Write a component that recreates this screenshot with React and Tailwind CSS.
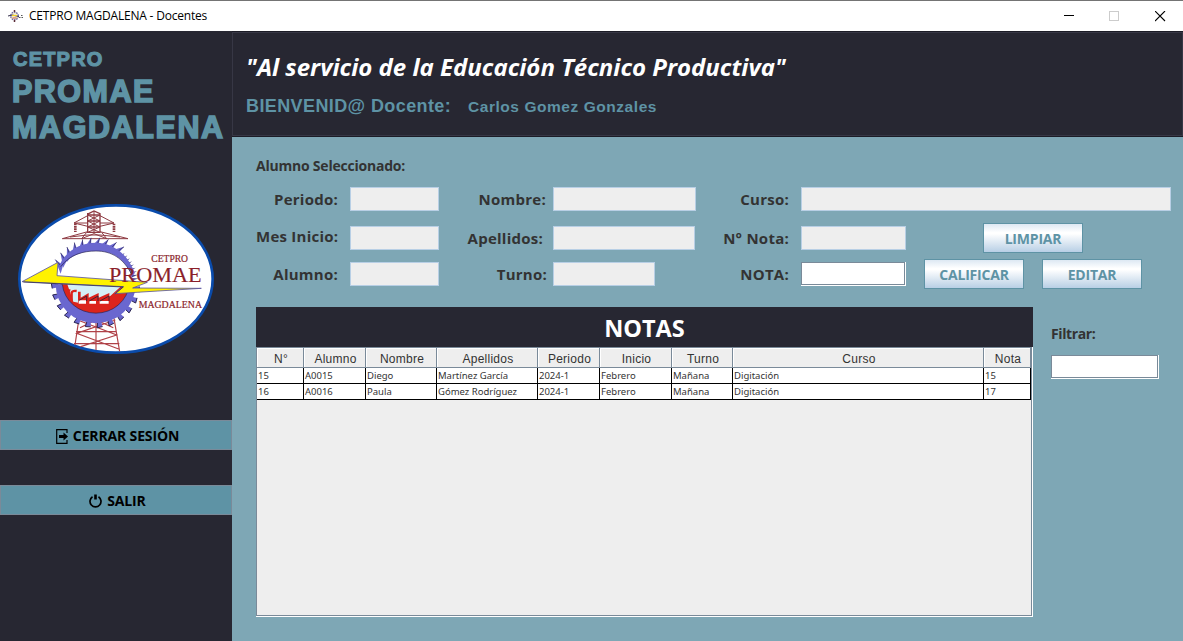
const COLUMNS = [
  { title: "N°", cell: "w-[47px]" },
  { title: "Alumno", cell: "w-[62px]" },
  { title: "Nombre", cell: "w-[71px]" },
  { title: "Apellidos", cell: "w-[101px]" },
  { title: "Periodo", cell: "w-[62px]" },
  { title: "Inicio", cell: "w-[72px]" },
  { title: "Turno", cell: "w-[61px]" },
  { title: "Curso", cell: "w-[251px]" },
  { title: "Nota", cell: "w-[47px]" },
];

const ROWS = [
  ["15", "A0015", "Diego", "Martínez García", "2024-1", "Febrero", "Mañana", "Digitación", "15"],
  ["16", "A0016", "Paula", "Gómez Rodríguez", "2024-1", "Febrero", "Mañana", "Digitación", "17"],
];

const TEETH = Array.from({ length: 12 }, (_, i) => 178 - i * 15.6);
const BLADES = Array.from({ length: 10 }, (_, i) => 203 + i * 10.5);
const FINE = Array.from({ length: 9 }, (_, i) => 312 + i * 5);
const CX = 257;
const CY = 268;

function polar(r, deg) {
  const a = (deg * Math.PI) / 180;
  return `${(CX + r * Math.cos(a)).toFixed(1)},${(CY + r * 0.98 * Math.sin(a)).toFixed(1)}`;
}

function Logo() {
  return (
    <svg viewBox="0 0 636 495" className="h-[165px] w-[212px]">
      <defs>
        <clipPath id="oval">
          <ellipse cx="318" cy="252" rx="288" ry="218" />
        </clipPath>
      </defs>
      <ellipse cx="318" cy="252" rx="290" ry="221" fill="#fff" stroke="#0a4bab" strokeWidth="8" />
      <g clipPath="url(#oval)">
        <g fill="none" stroke="#8e3a42" strokeWidth="3">
          <path d="M236 56 252 48 270 56V112H233V56ZM233 60H270M233 78H270M233 96H270" strokeWidth="4" />
          <path d="M233 60 270 78 233 96 270 112M270 60 233 78 270 96 233 112M252 48V115" />
          <path d="M233 62 192 84H233M270 62 312 84H270M192 84 233 94M312 84 270 94" />
          <path d="M196 86V111M312 86V111" strokeWidth="8" strokeDasharray="5 2" />
          <path d="M233 110 157 131H354L270 110M180 126 233 120H270L330 126M230 112 215 131 252 116 290 131 275 112" />
        </g>
        <g fill="none" stroke="#b04248" strokeWidth="3.5">
          <path d="M207 370 192 470M312 370 329 470M203 375 320 420 196 460M316 375 200 415 326 462M198 410H320M192 446H328M210 398 258 375 310 398M258 375V480" />
        </g>
        <ellipse cx="257" cy="268" rx="112" ry="112" fill="#fff" />
        <path d="M146 268A112 110 0 0 0 368 268Z" fill="#d5f0f7" />
        <path d="M152 268C160 330 205 362 258 362S350 330 360 268H340L300 304 240 330 190 320 172 268Z" fill="#dc241c" />
        <path d="M173 318V293Q174 285 181 286M185 318V293Q187 286 200 288" fill="none" stroke="#dc241c" strokeWidth="7" />
        <path d="M204 318V290H212V308L236 294V308L266 294V308L298 294V330H204Z" fill="#dc241c" />
        <path d="M206 316H228V326H206ZM238 318H258V326H238ZM269 318H296V326H269Z" fill="#fff" />
        <path d="M206 317 230 303V318M238 318 264 303V318M270 318 297 303V318" fill="none" stroke="#26233a" strokeWidth="2.5" />
        <g fill="#6a67cf">
          {TEETH.map((d) => (
            <g key={d}>
              <polygon points={[polar(112, d - 2.5), polar(131, d - 3.5), polar(133, d + 3.5), polar(112, d + 2.5)].join(" ")} />
              <polyline points={[polar(131, d - 3.5), polar(133, d + 3.5), polar(118, d + 3)].join(" ")} fill="none" stroke="#292450" strokeWidth="3" />
            </g>
          ))}
          {BLADES.map((d) => (
            <g key={d}>
              <polygon points={[polar(110, d - 6), polar(143, d + 9), polar(114, d + 8)].join(" ")} />
              <polyline points={[polar(143, d + 9), polar(122, d + 6)].join(" ")} fill="none" stroke="#292450" strokeWidth="2" />
            </g>
          ))}
          {FINE.map((d) => (
            <polygon key={d} points={[polar(110, d - 2), polar(130, d), polar(110, d + 2)].join(" ")} fill="#4a478f" />
          ))}
        </g>
        <path d="M137 268A120 117 0 0 0 377 268H358A101 96 0 0 1 157 268Z" fill="#6a67cf" />
        <path d="M146 220C158 175 205 143 258 143C310 143 356 180 374 235L368 243C340 190 310 168 258 168C205 168 170 190 152 220Z" fill="#6a67cf" />
        <path d="M157 268A101 96 0 0 0 358 268M152 215C180 178 220 168 258 168C305 168 340 190 365 238" fill="none" stroke="#292450" strokeWidth="2" />
        <path d="M36 260 144 202 141 242 412 262 368 279 574 280 314 296 340 275Z" fill="#fff200" stroke="#5a55a0" strokeWidth="2.5" />
        <path d="M40 261 340 276 316 296" fill="none" stroke="#34305c" strokeWidth="2.500" />
      </g>
      <g fill="#8b1f2b" fontFamily="'Liberation Serif', serif" stroke="#8b1f2b">
        <text x="424" y="202" fontSize="28" textLength="110" lengthAdjust="spacingAndGlyphs" strokeWidth="0.6">CETPRO</text>
        <text x="297" y="262" fontSize="62" textLength="278" lengthAdjust="spacingAndGlyphs" strokeWidth="0.4">PROMAE</text>
        <text x="386" y="338" fontSize="30" textLength="190" lengthAdjust="spacingAndGlyphs" strokeWidth="0.6">MAGDALENA</text>
      </g>
    </svg>
  );
}

function TitleBar() {
  return (
    <header className="flex h-[31px] shrink-0 items-center border-t border-[#747474] bg-white pl-2">
      <svg viewBox="0 0 16 16" className="h-4 w-4">
        <circle cx="6.5" cy="8" r="3.8" fill="#f1e9c8" stroke="#6a67a8" strokeWidth="1.3" strokeDasharray="1.6 .8" />
        <path d="M6.5 2V4M6.500 12V14" stroke="#5a2a35" strokeWidth="1.500" />
        <path d="M0 8 4 7 11 8.500" fill="none" stroke="#3a3550" />
        <path d="M4 7.500H9" stroke="#f0d020" />
        <path d="M4.500 10H8.500" stroke="#c86050" />
        <path d="M11 9.500H15M13 7.500H15" stroke="#555" strokeDasharray="1.500 1" />
      </svg>
      <span className="ml-[5px] text-[12px] leading-4 tracking-[-0.2px] text-black">CETPRO MAGDALENA - Docentes</span>
      <div className="ml-auto flex items-center gap-[35px] pr-[17px]">
        <svg viewBox="0 0 11 11" className="h-[11px] w-[11px]" shapeRendering="crispEdges"><path d="M1 4.500H11" stroke="#000" /></svg>
        <svg viewBox="0 0 11 11" className="h-[11px] w-[11px]" shapeRendering="crispEdges"><path d="M.5 .5H9.500V9.500H.5Z" fill="none" stroke="#ccc" /></svg>
        <svg viewBox="0 0 11 11" className="h-[11px] w-[11px]"><path d="M0 0 10 10M10 0 0 10" stroke="#000" strokeWidth="1.100" /></svg>
      </div>
    </header>
  );
}

function SideButton({ children, className }) {
  return (
    <button className={`flex h-[30px] w-full items-center justify-center border border-[#7a8a99] bg-[#5e93a5] pl-[3px] pt-0.5 text-[14px] font-bold leading-5 tracking-[-0.15px] text-black ${className}`}>
      {children}
    </button>
  );
}

function Sidebar() {
  return (
    <aside className="flex w-[232px] shrink-0 flex-col bg-[#272732]">
      <div className="h-[164px] whitespace-nowrap pl-3 pt-4 font-['Liberation_Sans',Arial,sans-serif] font-bold text-[#5e93a5]">
        <p className="-mt-px pl-px text-[20px] leading-[26px] tracking-[1.2px] [-webkit-text-stroke:1.1px_#5e93a5]">CETPRO</p>
        <p className="mt-px text-[30.5px] leading-[36px] tracking-[1.5px] [-webkit-text-stroke:1.6px_#5e93a5]">PROMAE</p>
        <p className="text-[30.5px] leading-[36px] tracking-[1.6px] [-webkit-text-stroke:1.6px_#5e93a5]">MAGDALENA</p>
      </div>
      <div className="flex h-[225px] pl-[10px]"><Logo /></div>
      <SideButton className="gap-1">
        <svg viewBox="0 0 13 15" className="h-[15px] w-[13px]">
          <path d="M11 4V.7H.7V14.300H11V11" fill="none" stroke="#000" strokeWidth="1.200" />
          <path d="M3 6H7.500V3.500L12 7.500 7.500 11.500V9H3Z" fill="#000" />
        </svg>
        <span>CERRAR SESIÓN</span>
      </SideButton>
      <SideButton className="mt-[35px] gap-[5px]">
        <svg viewBox="0 0 13 14" className="h-[14px] w-[13px]" fill="none" stroke="#000">
          <path d="M3.500 2.800A5.500 5.500 0 1 0 9.500 2.800" strokeWidth="1.700" />
          <path d="M6.500 .5V5.500" strokeWidth="2.600" />
        </svg>
        <span>SALIR</span>
      </SideButton>
    </aside>
  );
}

function Banner() {
  return (
    <div className="flex h-[106px] shrink-0 flex-col border-b border-t border-[#1c1c26] bg-[#272732]">
      <div className="flex-1 whitespace-nowrap border border-[#373745] pl-[13px] pt-[17px]">
        <h1 className="text-[24px] font-bold italic leading-[34px] text-white">"Al servicio de la Educación Técnico Productiva"</h1>
        <div className="mt-[11px] flex items-baseline font-['Liberation_Sans',Arial,sans-serif] font-bold leading-[22px] text-[#5e93a5]">
          <span className="w-[222px] text-[18px] tracking-[0.4px]">BIENVENID@ Docente:</span>
          <span className="text-[15.5px] tracking-[0.55px]">Carlos Gomez Gonzales</span>
        </div>
      </div>
    </div>
  );
}

function Label({ children, className }) {
  return (
    <label className={`shrink-0 whitespace-nowrap pr-px text-right text-[15px] font-bold leading-[25px] tracking-[0.25px] text-[#333] ${className}`}>
      {children}
    </label>
  );
}

function ReadOnly({ className }) {
  return <div className={`h-6 shrink-0 border border-[#b8cfe5] bg-[#eee] ${className}`} />;
}

function Editable({ className }) {
  return (
    <div className={`h-6 shrink-0 border-b border-r border-white ${className}`}>
      <div className="h-full border border-[#7a8a99] bg-white" />
    </div>
  );
}

function ActionButton({ children, className }) {
  return (
    <button className={`flex h-[30px] w-[100px] shrink-0 items-center justify-center border border-[#5e93a5] bg-linear-[180deg,#dde8f3_0%,#fff_30%,#fff_35%,#b8cfe5_100%] pt-0.5 text-[14px] font-bold leading-5 tracking-[-0.2px] text-[#5e93a5] ${className}`}>
      {children}
    </button>
  );
}

function StudentForm() {
  return (
    <section className="pl-6">
      <h2 className="h-[50px] pt-[19px] text-[14px] font-bold leading-5 tracking-[-0.22px] text-[#333]">Alumno Seleccionado:</h2>
      <div className="flex h-[39px] items-start">
        <Label className="w-[83px]">Periodo:</Label>
        <ReadOnly className="ml-[11px] w-[89px]" />
        <Label className="w-[108px]">Nombre:</Label>
        <ReadOnly className="ml-[6px] w-[143px]" />
        <Label className="w-[94px]">Curso:</Label>
        <ReadOnly className="ml-[11px] w-[370px]" />
      </div>
      <div className="flex h-[36px] items-start">
        <Label className="-mt-0.5 w-[83px]">Mes Inicio:</Label>
        <ReadOnly className="ml-[11px] w-[89px]" />
        <Label className="w-[105px]">Apellidos:</Label>
        <ReadOnly className="ml-[9px] w-[142px]" />
        <Label className="w-[95px]">N° Nota:</Label>
        <ReadOnly className="ml-[11px] w-[105px]" />
        <ActionButton className="-mt-[3px] ml-[77px]">LIMPIAR</ActionButton>
      </div>
      <div className="flex h-[45px] items-start">
        <Label className="w-[83px]">Alumno:</Label>
        <ReadOnly className="ml-[11px] w-[89px]" />
        <Label className="w-[109px]">Turno:</Label>
        <ReadOnly className="ml-[5px] w-[102px]" />
        <Label className="w-[135px]">NOTA:</Label>
        <Editable className="ml-[11px] w-[105px]" />
        <ActionButton className="-mt-[3px] ml-[18px]">CALIFICAR</ActionButton>
        <ActionButton className="-mt-[3px] ml-[18px]">EDITAR</ActionButton>
      </div>
    </section>
  );
}

function GradesTable() {
  return (
    <div className="flex h-[310px] w-[777px] flex-col">
      <div className="flex h-10 shrink-0 items-center justify-center bg-[#272732] pt-px text-[23.5px] font-bold leading-8 text-white">NOTAS</div>
      <div className="min-h-0 flex-1 border-b border-r border-white">
        <div className="h-full border border-[#7a8a99] bg-[#eee]">
          <div className="flex h-5">
            {COLUMNS.map((c) => (
              <div key={c.title} className={`shrink-0 border-b border-r border-[#7a8a99] ${c.cell}`}>
                <div className="h-full border-l border-t border-white pl-px text-center font-['Liberation_Sans',Arial,sans-serif] text-[12px] leading-5 tracking-[0.25px] text-[#333]">
                  {c.title}
                </div>
              </div>
            ))}
          </div>
          {ROWS.map((row) => (
            <div key={row[0]} className="flex h-4">
              {row.map((value, i) => (
                <div key={i} className={`shrink-0 whitespace-nowrap border-b border-r border-black bg-white pl-px font-['Noto_Sans',sans-serif] text-[9.5px] leading-[15px] text-[#333] ${COLUMNS[i].cell}`}>
                  {value}
                </div>
              ))}
            </div>
          ))}
        </div>
      </div>
    </div>
  );
}

export default function App() {
  return (
    <div className="flex h-[641px] w-[1183px] flex-col overflow-hidden bg-white font-['Open_Sans','Noto_Sans',sans-serif]">
      <TitleBar />
      <div className="flex min-h-0 flex-1">
        <Sidebar />
        <main className="flex min-w-0 flex-1 flex-col bg-[#7ea7b5]">
          <Banner />
          <StudentForm />
          <section className="flex pl-6">
            <GradesTable />
            <div className="ml-[18px] pt-[17px]">
              <label className="block text-[14px] font-bold leading-5 tracking-[-0.4px] text-[#333]">Filtrar:</label>
              <Editable className="mt-[11px] w-[108px]" />
            </div>
          </section>
        </main>
      </div>
    </div>
  );
}
